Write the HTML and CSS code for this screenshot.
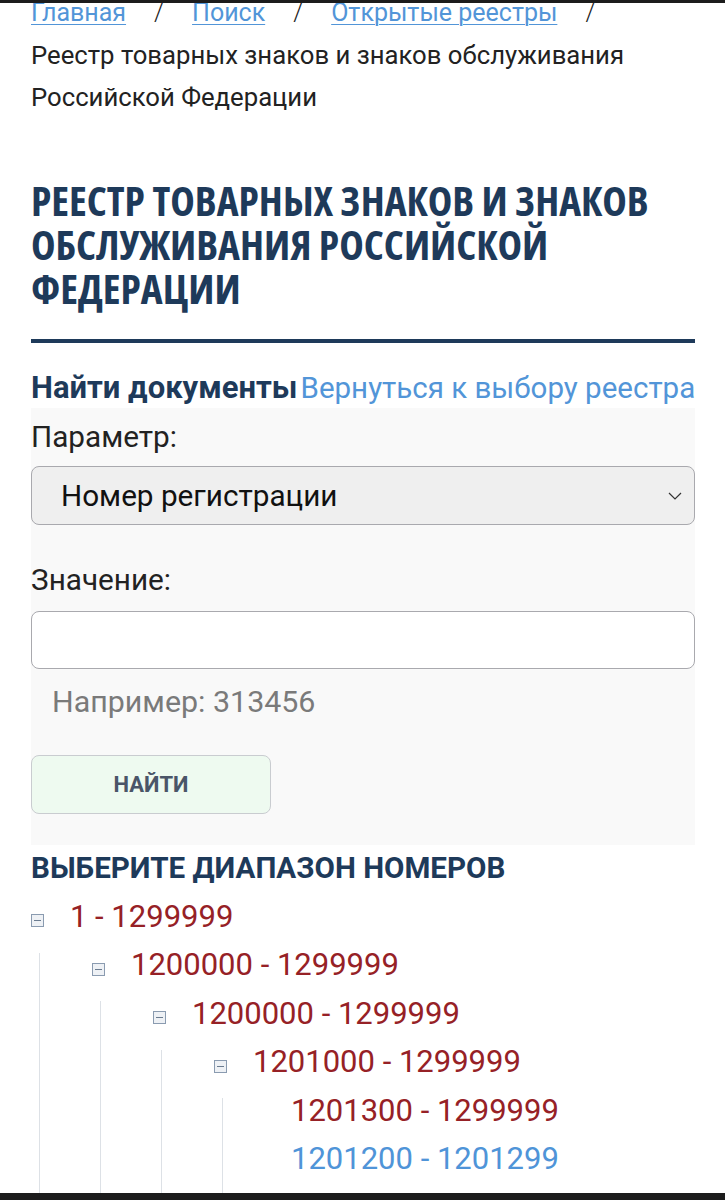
FILE: index.html
```html
<!DOCTYPE html>
<html lang="ru">
<head>
<meta charset="utf-8">
<title>Реестр товарных знаков</title>
<link rel="stylesheet" href="styles.css">
</head>
<body>
<div class="topbar"></div>
<main class="page">
  <nav class="crumbs">
    <a href="#">Главная</a><span class="sep">/</span><a href="#">Поиск</a><span class="sep">/</span><a href="#">Открытые реестры</a><span class="sep">/</span>
    <span class="current">Реестр товарных знаков и знаков обслуживания Российской Федерации</span>
  </nav>

  <h1 class="title">РЕЕСТР ТОВАРНЫХ ЗНАКОВ И ЗНАКОВ ОБСЛУЖИВАНИЯ РОССИЙСКОЙ ФЕДЕРАЦИИ</h1>
  <div class="rule"></div>

  <div class="find-head">
    <span class="find-title">Найти документы</span><a class="back" href="#">Вернуться к выбору реестра</a>
  </div>

  <form class="panel">
    <label class="lbl">Параметр:</label>
    <div class="select">
      <span>Номер регистрации</span>
      <svg class="chev" width="14" height="8" viewBox="0 0 14 8"><path d="M1 1 L7 7 L13 1" fill="none" stroke="#333" stroke-width="1.2"/></svg>
    </div>
    <label class="lbl lbl2">Значение:</label>
    <div class="input"></div>
    <div class="hint">Например: 313456</div>
    <button type="button" class="btn">НАЙТИ</button>
  </form>

  <h2 class="range-title">ВЫБЕРИТЕ ДИАПАЗОН НОМЕРОВ</h2>

  <ul class="tree">
    <li>
      <div class="node"><span class="tog"></span><a class="red" href="#">1 - 1299999</a></div>
      <ul>
        <li>
          <div class="node"><span class="tog"></span><a class="red" href="#">1200000 - 1299999</a></div>
          <ul>
            <li>
              <div class="node"><span class="tog"></span><a class="red" href="#">1200000 - 1299999</a></div>
              <ul>
                <li>
                  <div class="node"><span class="tog"></span><a class="red" href="#">1201000 - 1299999</a></div>
                  <ul class="leaves">
                    <li><div class="node leaf"><a class="red" href="#">1201300 - 1299999</a></div></li>
                    <li><div class="node leaf"><a class="blue" href="#">1201200 - 1201299</a></div></li>
                  </ul>
                </li>
              </ul>
            </li>
          </ul>
        </li>
      </ul>
    </li>
  </ul>
</main>
<div class="bottombar"></div>
</body>
</html>
```

FILE: styles.css
```css
html, body {
  margin: 0;
  padding: 0;
  background: #fff;
  height: 1200px;
  overflow: hidden;
}
body {
  font-family: Roboto, "Open Sans", sans-serif;
  color: #222;
  position: relative;
}
.topbar {
  position: relative;
  z-index: 2;
  height: 3px;
  background: #1c1c1c;
}
.bottombar {
  position: absolute;
  left: 0;
  right: 0;
  top: 1193px;
  height: 7px;
  background: #1c1c1c;
}
.page {
  padding: 0 30px 0 31px;
}
.crumbs {
  font-size: 25px;
  line-height: 42px;
  margin-top: -11px;
  color: #222;
}
.crumbs a {
  color: #5295d8;
  text-decoration: underline;
  text-underline-offset: 3px;
  text-decoration-thickness: 1px;
}
.crumbs .sep {
  display: inline-block;
  width: 66px;
  text-align: center;
  color: #222;
  font-weight: 300;
}
.crumbs .current {
  display: block;
  font-size: 25.7px;
}
.title {
  margin: 60px 0 0;
  font-family: "Open Sans", sans-serif;
  font-stretch: 75%;
  font-size: 41.5px;
  line-height: 44px;
  font-weight: 700;
  color: #1e3a5a;
}
.rule {
  margin-top: 29px;
  height: 4px;
  background: #1e3a5a;
}
.find-head {
  margin-top: 25px;
  display: flex;
  align-items: baseline;
  white-space: nowrap;
  height: 40px;
}
.find-title {
  font-size: 31px;
  font-weight: 700;
  color: #1e3a5a;
  line-height: 40px;
}
.back {
  margin-left: 3px;
  font-size: 29.5px;
  color: #5295d8;
  text-decoration: none;
  line-height: 40px;
}
.panel {
  display: block;
  background: #f9f9f9;
  padding: 9px 0 31px;
  margin: 0;
}
.lbl {
  display: block;
  font-size: 29.7px;
  line-height: 40px;
  color: #222;
}
.lbl2 {
  margin-top: 35px;
}
.select {
  box-sizing: border-box;
  margin-top: 9px;
  height: 59px;
  border: 1px solid #a9a9ae;
  border-radius: 8px;
  background: #efefef;
  display: flex;
  align-items: center;
  justify-content: space-between;
  padding: 0 12px 0 29px;
  font-size: 29.7px;
  color: #111;
}
.chev {
  display: block;
}
.input {
  box-sizing: border-box;
  margin-top: 11px;
  height: 58px;
  border: 1px solid #a9a9ae;
  border-radius: 8px;
  background: #fff;
}
.hint {
  margin-top: 13px;
  padding-left: 21px;
  font-size: 30.4px;
  line-height: 40px;
  color: #7a7a7a;
}
.btn {
  display: block;
  box-sizing: border-box;
  margin-top: 33px;
  width: 240px;
  height: 59px;
  border: 1px solid #c9ccd0;
  border-radius: 8px;
  background: #eefaf0;
  font-family: Roboto, sans-serif;
  font-weight: 700;
  font-size: 22px;
  color: #4a5568;
  padding: 0;
}
.range-title {
  margin: 3px 0 0;
  font-size: 29.6px;
  line-height: 40px;
  font-weight: 700;
  color: #1e3a5a;
}
.tree, .tree ul {
  list-style: none;
  margin: 0;
  padding: 0;
}
.tree {
  margin-top: 4px;
}
.tree ul {
  position: relative;
  margin-left: 8px;
  padding-left: 53px;
}
.tree ul::before {
  content: "";
  position: absolute;
  left: 0;
  top: 12px;
  bottom: 0;
  width: 1px;
  background: #dde1e6;
}
.tree ul.leaves {
  padding-left: 69px;
  padding-bottom: 40px;
}
.node {
  display: flex;
  align-items: center;
  height: 48.5px;
  font-size: 31px;
  white-space: nowrap;
}
.tog {
  display: inline-block;
  flex: none;
  box-sizing: border-box;
  width: 13px;
  height: 13px;
  border: 1px solid #8a9bb0;
  background: #eef1f5;
  position: relative;
  margin-right: 26px;
  margin-top: 9px;
}
.tog::after {
  content: "";
  position: absolute;
  left: 2px;
  right: 2px;
  top: 5px;
  height: 1px;
  background: #6b7c90;
}
.node a {
  text-decoration: none;
}
.red {
  color: #962126;
}
.blue {
  color: #4f94d8;
}
```
